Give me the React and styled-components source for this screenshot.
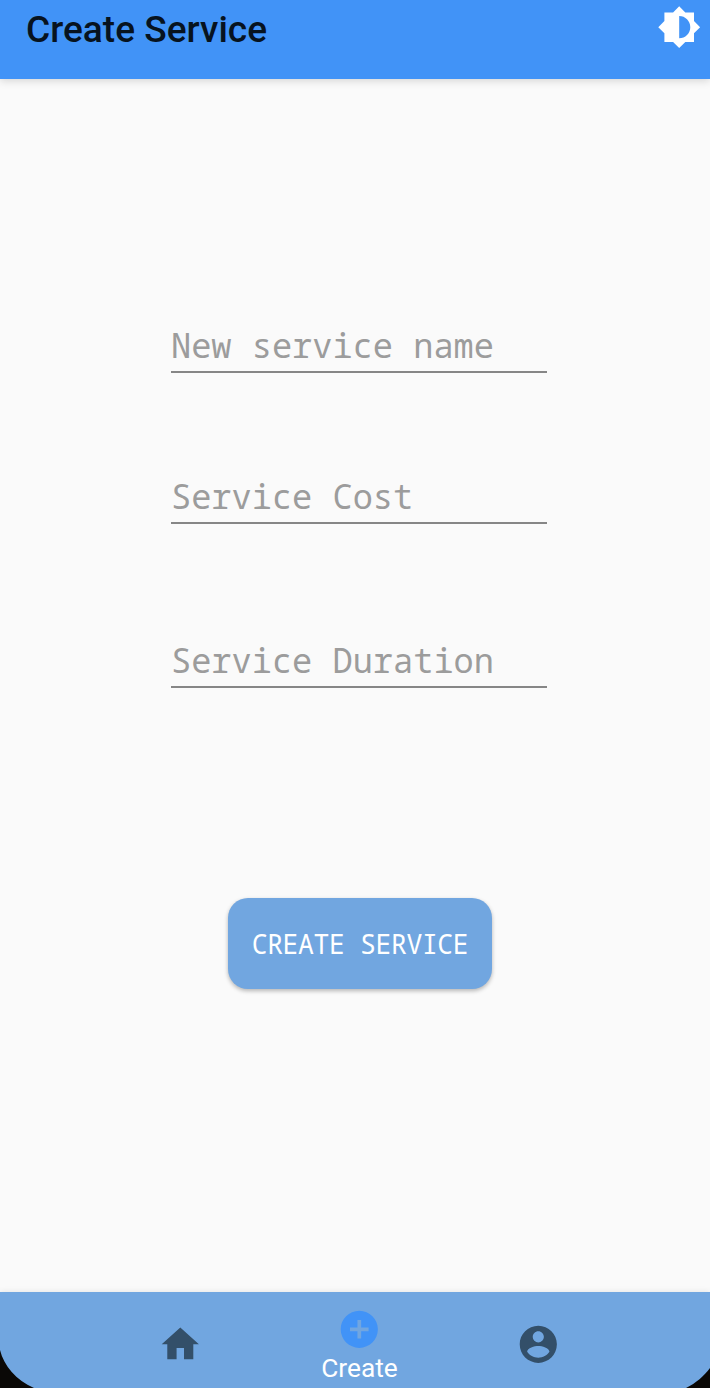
import React from "react";
import styled, { createGlobalStyle } from "styled-components";

const GlobalStyle = createGlobalStyle`
  * { box-sizing: border-box; }
  body { margin: 0; background: #fafafa; }
`;

const mono = `"Noto Sans Mono", "Droid Sans Mono", "DejaVu Sans Mono", monospace`;

const Screen = styled.div`
  position: relative;
  width: 710px;
  height: 1388px;
  display: flex;
  flex-direction: column;
  overflow: hidden;
  background: #fafafa;
  font-family: Roboto, sans-serif;
`;

const AppBar = styled.header`
  flex: none;
  height: 79px;
  padding: 5px 8.5px 0 26px;
  display: flex;
  align-items: flex-start;
  justify-content: space-between;
  background: #4193f7;
  box-shadow: 0 2px 8px rgba(0, 0, 0, 0.15);
`;

const Title = styled.h1`
  margin: 3px 0 0;
  font-size: 37.1px;
  line-height: 44px;
  font-weight: 500;
  color: #07131f;
`;

const Icon = styled.svg`
  display: block;
  flex: none;
  width: ${(p) => p.$size}px;
  height: ${(p) => p.$size}px;
  fill: ${(p) => p.$color};
`;

const Form = styled.main`
  flex: 1;
  display: flex;
  flex-direction: column;
  align-items: center;
  padding: 240px 0 0 8px;
`;

const Field = styled.input`
  display: block;
  width: 376px;
  height: 54px;
  margin: 0 0 ${(p) => p.$gap}px;
  padding: 0 0 1px;
  border: 0;
  border-bottom: 2px solid #868686;
  border-radius: 0;
  outline: 0;
  background: transparent;
  font-family: ${mono};
  font-size: 33.65px;
  color: #222;
  &::placeholder { color: #9c9c9c; opacity: 1; }
`;

const SubmitButton = styled.button`
  width: 264px;
  height: 91px;
  margin-left: 2px;
  padding: 1px 0 0;
  border: 0;
  border-radius: 20px;
  background: #71a6e0;
  box-shadow: 0 2px 4px rgba(0, 0, 0, 0.28);
  font-family: ${mono};
  font-size: 26.4px;
  letter-spacing: -0.36px;
  color: #fff;
  white-space: nowrap;
`;

const NavBar = styled.nav`
  flex: none;
  height: 96px;
  padding: 0 82px 0 91px;
  display: flex;
  background: #71a6e0;
  box-shadow: 0 0 6px rgba(0, 0, 0, 0.1);
`;

const NavItem = styled.a`
  flex: 1;
  display: flex;
  flex-direction: column;
  align-items: center;
  padding-top: ${(p) => (p.$active ? 15 : 29.5)}px;
`;

const NavLabel = styled.span`
  font-size: 26.3px;
  line-height: 32px;
  color: #fff;
`;

const Corner = styled.svg`
  position: absolute;
  bottom: 0;
  ${(p) => p.$side}: 0;
  display: block;
`;

export default function App() {
  return (
    <>
      <GlobalStyle />
      <Screen>
        <AppBar>
          <Title>Create Service</Title>
          <Icon $size={44.4} $color="#fff" viewBox="0 0 24 24">
            <path d="M20 15.31L23.31 12 20 8.69V4h-4.69L12 .69 8.69 4H4v4.69L.69 12 4 15.31V20h4.69L12 23.31 15.31 20H20v-4.69zM12 18V6c3.31 0 6 2.69 6 6s-2.69 6-6 6z" />
          </Icon>
        </AppBar>
        <Form>
          <Field $gap={97} placeholder="New service name" />
          <Field $gap={110} placeholder="Service Cost" />
          <Field $gap={209.5} placeholder="Service Duration" />
          <SubmitButton type="button">CREATE SERVICE</SubmitButton>
        </Form>
        <NavBar>
          <NavItem>
            <Icon $size={44.6} $color="#334f69" viewBox="0 0 24 24">
              <path d="M10 20v-6h4v6h5v-8h3L12 3 2 12h3v8z" />
            </Icon>
          </NavItem>
          <NavItem $active>
            <Icon $size={44.6} $color="#4193f7" viewBox="0 0 24 24">
              <path d="M12 2C6.48 2 2 6.48 2 12s4.48 10 10 10 10-4.48 10-10S17.52 2 12 2zm5 11h-4v4h-2v-4H7v-2h4V7h2v4h4v2z" />
            </Icon>
            <NavLabel>Create</NavLabel>
          </NavItem>
          <NavItem>
            <Icon $size={44.6} $color="#334f69" viewBox="0 0 24 24">
              <path d="M12 2C6.48 2 2 6.48 2 12s4.48 10 10 10 10-4.48 10-10S17.52 2 12 2zm0 3c1.66 0 3 1.34 3 3s-1.34 3-3 3-3-1.34-3-3 1.34-3 3-3zm0 14.200c-2.500 0-4.710-1.280-6-3.220.03-1.990 4-3.080 6-3.080 1.990 0 5.970 1.090 6 3.080-1.290 1.940-3.500 3.220-6 3.220z" />
            </Icon>
          </NavItem>
        </NavBar>
        <Corner $side="left" width="34" height="38" viewBox="0 0 34 38">
          <path d="M0 0C4 16 16 30 34 38H0z" fill="#0a0806" />
        </Corner>
        <Corner $side="right" width="24" height="20" viewBox="0 0 24 20">
          <path d="M24 0C18 8 10 15 0 20H24z" fill="#0a0806" />
        </Corner>
      </Screen>
    </>
  );
}
